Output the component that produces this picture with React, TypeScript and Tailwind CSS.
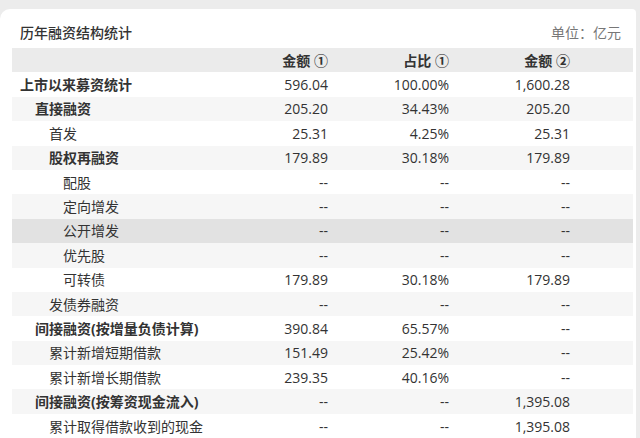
import React from 'react';

type Row = {
  label: string;
  level: number;
  bold?: boolean;
  a: string;
  b: string;
  c: string;
};

const rows: Row[] = [
  { label: '上市以来募资统计', level: 0, bold: true, a: '596.04', b: '100.00%', c: '1,600.28' },
  { label: '直接融资', level: 1, bold: true, a: '205.20', b: '34.43%', c: '205.20' },
  { label: '首发', level: 2, a: '25.31', b: '4.25%', c: '25.31' },
  { label: '股权再融资', level: 2, bold: true, a: '179.89', b: '30.18%', c: '179.89' },
  { label: '配股', level: 3, a: '--', b: '--', c: '--' },
  { label: '定向增发', level: 3, a: '--', b: '--', c: '--' },
  { label: '公开增发', level: 3, a: '--', b: '--', c: '--' },
  { label: '优先股', level: 3, a: '--', b: '--', c: '--' },
  { label: '可转债', level: 3, a: '179.89', b: '30.18%', c: '179.89' },
  { label: '发债券融资', level: 2, a: '--', b: '--', c: '--' },
  { label: '间接融资(按增量负债计算)', level: 1, bold: true, a: '390.84', b: '65.57%', c: '--' },
  { label: '累计新增短期借款', level: 2, a: '151.49', b: '25.42%', c: '--' },
  { label: '累计新增长期借款', level: 2, a: '239.35', b: '40.16%', c: '--' },
  { label: '间接融资(按筹资现金流入)', level: 1, bold: true, a: '--', b: '--', c: '1,395.08' },
  { label: '累计取得借款收到的现金', level: 2, a: '--', b: '--', c: '1,395.08' },
];

const indent = ['pl-[8px]', 'pl-[23px]', 'pl-[37px]', 'pl-[51px]'];

const App: React.FC = () => {
  return (
    <div
      className="min-h-[438px] bg-[#ececec] pt-[9px] overflow-hidden"
      style={{ fontFamily: '"Open Sans", "Noto Sans CJK SC", sans-serif' }}
    >
      <div className="mr-[4px] bg-white rounded-tl-[10px] rounded-tr-[4px] h-[429px] text-[#333]">
        {/* title */}
        <div className="flex items-end justify-between pl-[20px] pr-[15px] h-[39px] pb-[5px]">
          <span className="text-[14px] leading-[20px] font-medium text-[#333]">历年融资结构统计</span>
          <span className="text-[14px] leading-[20px] text-[#777]">单位：亿元</span>
        </div>

        <div className="ml-[12px] mr-[3px] text-[14px]">
          <div className="grid grid-cols-[236px_80px_121px_121px_1fr] h-[24.4px] items-center bg-[#ebebeb] font-bold">
            <div />
            <div className="text-right">金额 ①</div>
            <div className="text-right">占比 ①</div>
            <div className="text-right">金额 ②</div>
            <div />
          </div>

          {rows.map((r, i) => {
            let bg = i % 2 === 1 ? 'bg-[#f6f6f6]' : 'bg-white';
            if (i === 6) bg = 'bg-[#e2e2e2]';
            return (
              <div
                key={r.label}
                className={`grid grid-cols-[236px_80px_121px_121px_1fr] h-[24.4px] items-center ${bg}`}
              >
                <div className={`${indent[r.level]} whitespace-nowrap ${r.bold ? 'font-bold' : ''}`}>
                  {r.label}
                </div>
                <div className="text-right">{r.a}</div>
                <div className="text-right">{r.b}</div>
                <div className="text-right">{r.c}</div>
                <div />
              </div>
            );
          })}
        </div>
      </div>
    </div>
  );
};

export default App;
